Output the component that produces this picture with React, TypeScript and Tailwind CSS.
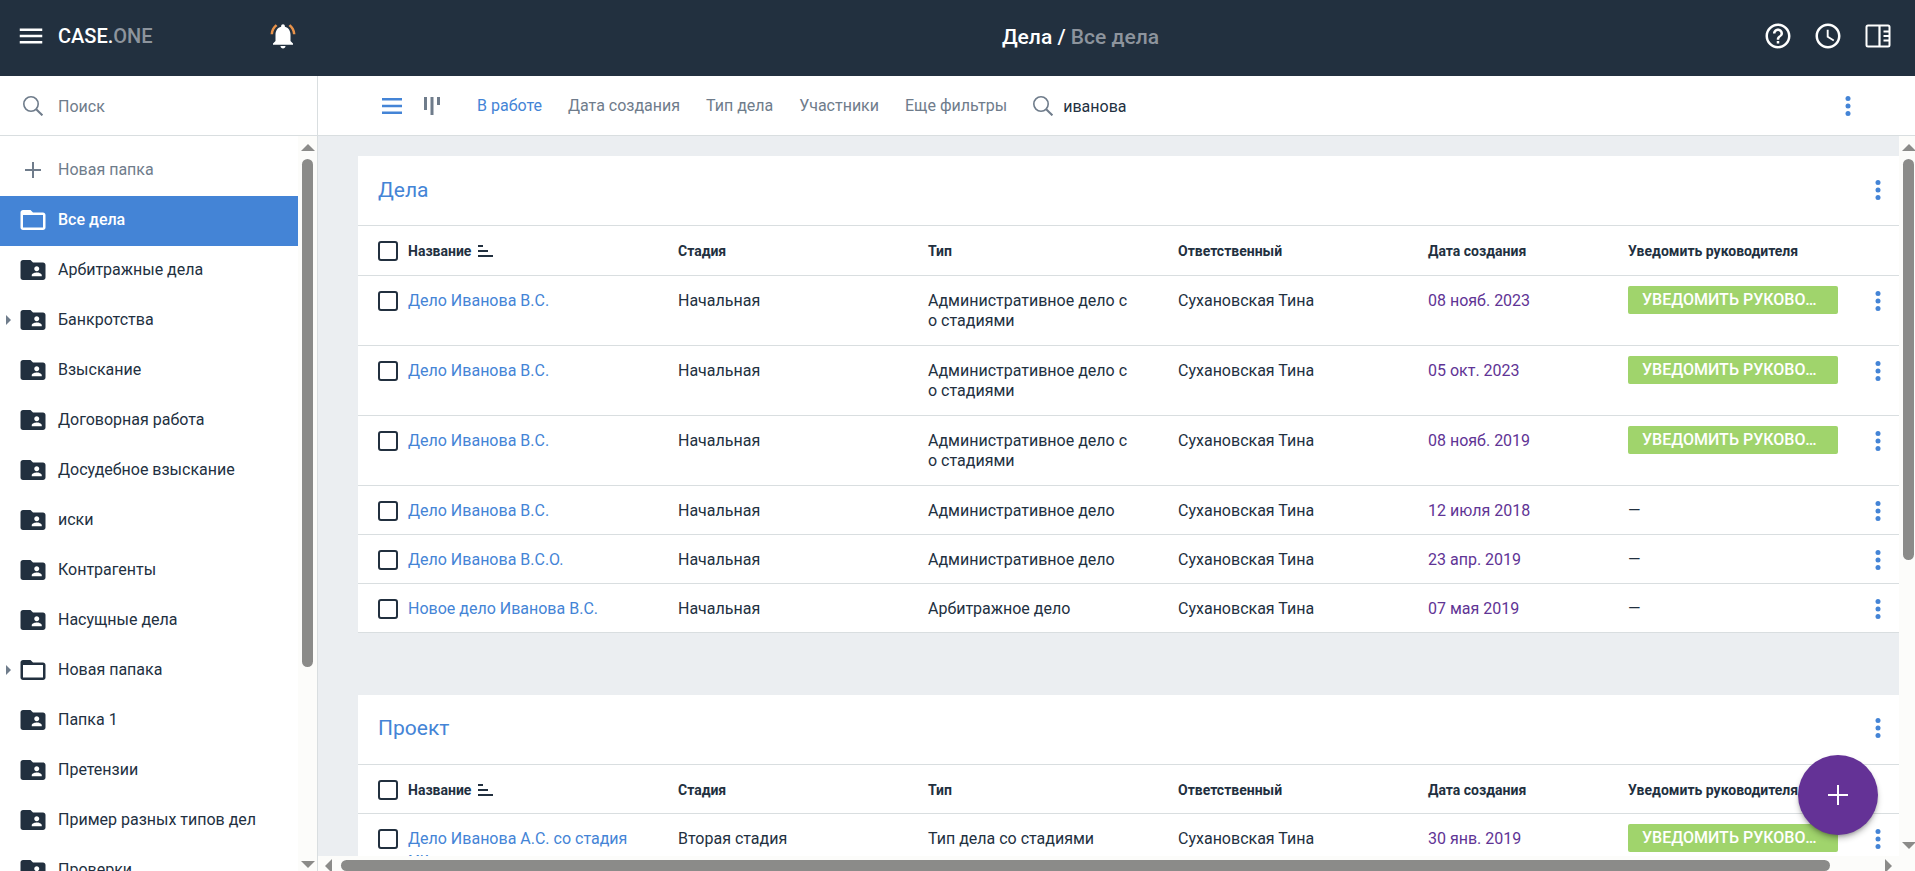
import React from "react";
import {
  MdAccessTime,
  MdFolderOpen,
  MdFolderShared,
  MdHelpOutline,
  MdMenu,
} from "react-icons/md";

type Folder = { name: string; open?: boolean; expandable?: boolean; active?: boolean };

const folders: Folder[] = [
  { name: "Все дела", open: true, active: true },
  { name: "Арбитражные дела" },
  { name: "Банкротства", expandable: true },
  { name: "Взыскание" },
  { name: "Договорная работа" },
  { name: "Досудебное взыскание" },
  { name: "иски" },
  { name: "Контрагенты" },
  { name: "Насущные дела" },
  { name: "Новая папака", open: true, expandable: true },
  { name: "Папка 1" },
  { name: "Претензии" },
  { name: "Пример разных типов дел" },
  { name: "Проверки" },
];

type Case = {
  name: string;
  stage: string;
  type: string;
  owner: string;
  date: string;
  notify: boolean;
};

const owner = "Сухановская Тина";
const staged = "Административное дело со стадиями";

const cases: Case[] = [
  { name: "Дело Иванова В.С.", stage: "Начальная", type: staged, owner, date: "08 нояб. 2023", notify: true },
  { name: "Дело Иванова В.С.", stage: "Начальная", type: staged, owner, date: "05 окт. 2023", notify: true },
  { name: "Дело Иванова В.С.", stage: "Начальная", type: staged, owner, date: "08 нояб. 2019", notify: true },
  { name: "Дело Иванова В.С.", stage: "Начальная", type: "Административное дело", owner, date: "12 июля 2018", notify: false },
  { name: "Дело Иванова В.С.О.", stage: "Начальная", type: "Административное дело", owner, date: "23 апр. 2019", notify: false },
  { name: "Новое дело Иванова В.С.", stage: "Начальная", type: "Арбитражное дело", owner, date: "07 мая 2019", notify: false },
];

const projects: Case[] = [
  { name: "Дело Иванова А.С. со стадиями", stage: "Вторая стадия", type: "Тип дела со стадиями", owner, date: "30 янв. 2019", notify: true },
];

function SearchIcon() {
  return (
    <svg viewBox="0 0 20 20" className="size-5 shrink-0" fill="none" stroke="currentColor" aria-hidden="true">
      <circle cx="8" cy="8" r="7.2" strokeWidth="1.6" />
      <path d="M13.2 13.2L19.4 19.4" strokeWidth="2" />
    </svg>
  );
}

function BellIcon() {
  return (
    <svg viewBox="0 0 24 24" className="size-[30px]" aria-hidden="true">
      <path
        fill="#e8924a"
        d="M7.58 4.08L6.15 2.65C3.75 4.48 2.17 7.3 2.03 10.5h2c.15-2.65 1.51-4.97 3.55-6.42zM19.97 10.5h2c-.15-3.2-1.73-6.02-4.12-7.85l-1.42 1.43c2.02 1.45 3.39 3.77 3.54 6.42z"
      />
      <path
        fill="#fff"
        d="M18 11c0-3.07-1.64-5.64-4.5-6.32V4c0-.83-.67-1.5-1.5-1.5s-1.5.67-1.5 1.5v.68C7.63 5.36 6 7.92 6 11v5l-2 2v1h16v-1l-2-2v-5zM12 22c1.1 0 2-.9 2-2h-4c0 1.1.9 2 2 2z"
      />
    </svg>
  );
}

function PanelIcon() {
  return (
    <svg viewBox="0 0 30 30" className="size-[30px]" fill="none" stroke="#fff" aria-hidden="true">
      <rect x="3.5" y="4.5" width="23" height="21" rx="1.5" strokeWidth="2" />
      <path d="M16.5 4v22" strokeWidth="2.2" />
      <path d="M20.5 10.5h6M20.5 15h6M20.5 19.5h6" strokeWidth="2" />
    </svg>
  );
}

function SortIcon() {
  return (
    <svg viewBox="0 0 15 12" className="h-3 w-[15px]" fill="currentColor" aria-hidden="true">
      <path d="M0 0h5v2H0zM0 5h10v2H0zM0 10h15v2H0z" />
    </svg>
  );
}

function MoreButton({ label }: { label: string }) {
  return (
    <button type="button" aria-label={label} className="flex h-5 w-5 items-center justify-center text-[#4484d6]">
      <svg viewBox="0 0 6 20" className="h-5 w-1.5 overflow-visible" fill="currentColor" aria-hidden="true">
        <circle cx="3" cy="2.5" r="2.5" />
        <circle cx="3" cy="10" r="2.5" />
        <circle cx="3" cy="17.5" r="2.5" />
      </svg>
    </button>
  );
}

function Arrow({ d, className }: { d: string; className: string }) {
  return (
    <svg viewBox="0 0 14 14" className={"shrink-0 " + className} fill="#8b8b89" aria-hidden="true">
      <path d={d} />
    </svg>
  );
}

function VerticalBar({ thumb }: { thumb: string }) {
  return (
    <div className="flex w-[19px] shrink-0 flex-col items-center bg-[#fcfcfa] pt-1" aria-hidden="true">
      <Arrow d="M7 4L14 11H0z" className="size-3.5" />
      <div className="mt-[5px] w-full flex-1">
        <div className={"mx-auto w-[11px] rounded-full bg-[#8b8b89] " + thumb} />
      </div>
      <Arrow d="M0 4h14L7 11z" className="size-3.5" />
    </div>
  );
}

function Tick({ label }: { label: string }) {
  return (
    <input
      type="checkbox"
      aria-label={label}
      className="block size-5 appearance-none rounded-[3px] border-2 border-[#22303f] bg-white checked:bg-[#22303f]"
    />
  );
}

const headings = ["Стадия", "Тип", "Ответственный", "Дата создания", "Уведомить руководителя"];

function CaseTable({ title, rows }: { title: string; rows: Case[] }) {
  return (
    <section className="bg-white">
      <div className="flex h-[70px] items-center justify-between border-b border-[#d9dee0] pr-[11px] pb-0.5 pl-5">
        <h2 className="text-[21px] leading-6 text-[#4484d6]">{title}</h2>
        <MoreButton label={"Действия: " + title} />
      </div>
      <table className="w-full table-fixed text-left">
        <colgroup>
          <col className="w-[50px]" />
          <col className="w-[270px]" />
          <col className="w-[250px]" />
          <col className="w-[250px]" />
          <col className="w-[250px]" />
          <col className="w-[200px]" />
          <col />
          <col className="w-[42px]" />
        </colgroup>
        <thead>
          <tr className="h-[49px] border-b border-[#d9dee0] text-sm font-bold">
            <th className="pt-0.5 pl-5">
              <Tick label={"Выбрать все: " + title} />
            </th>
            <th className="pt-0.5">
              <button type="button" className="flex items-center gap-[7px]">
                Название
                <SortIcon />
              </button>
            </th>
            {headings.map((heading) => (
              <th key={heading} className="pt-0.5 whitespace-nowrap">{heading}</th>
            ))}
            <th />
          </tr>
        </thead>
        <tbody>
          {rows.map((row, index) => (
            <tr key={index} className="border-b border-[#d9dee0] align-top">
              <td className="pt-[15px] pl-5">
                <Tick label={"Выбрать: " + row.name} />
              </td>
              <td className="pt-[15px] pr-10 pb-[13px]">
                <a href="#case" className="break-all text-[#4484d6]">{row.name}</a>
              </td>
              <td className="pt-[15px] pb-[13px]">{row.stage}</td>
              <td className="pt-[15px] pr-11 pb-[13px] break-all">{row.type}</td>
              <td className="pt-[15px] pb-[13px]">{row.owner}</td>
              <td className="pt-[15px] pb-[13px] text-[#5f3495]">{row.date}</td>
              {row.notify ? (
                <td className="pt-2.5 pb-[31px]">
                  <button
                    type="button"
                    className="block h-7 w-[210px] truncate rounded-xs bg-[#a0d46c] px-3.5 text-left font-medium text-white uppercase"
                  >
                    Уведомить руководителя
                  </button>
                </td>
              ) : (
                <td className="pt-[15px] pb-[13px]">—</td>
              )}
              <td className="pt-[15px] pl-[11px]">
                <MoreButton label={"Действия: " + row.name} />
              </td>
            </tr>
          ))}
        </tbody>
      </table>
    </section>
  );
}

const filters = ["Дата создания", "Тип дела", "Участники", "Еще фильтры"];

export default function App() {
  return (
    <div className="flex h-screen flex-col overflow-hidden bg-white font-[Roboto,sans-serif] text-base leading-5 text-[#22303f]">
      <header className="flex h-[76px] shrink-0 items-center bg-[#22303f] text-white">
        <div className="flex w-[318px] shrink-0 items-center pb-1">
          <button type="button" aria-label="Меню" className="ml-4 text-[30px]">
            <MdMenu />
          </button>
          <a href="#home" className="ml-3 w-[210px] text-xl leading-6 font-medium">
            CASE.<span className="text-[#8d949d]">ONE</span>
          </a>
          <button type="button" aria-label="Уведомления">
            <BellIcon />
          </button>
        </div>
        <h1 className="flex-1 pb-0.5 pl-20 text-center text-[21px] leading-6 font-medium whitespace-nowrap">
          Дела / <span className="text-[#8d949d]">Все дела</span>
        </h1>
        <div className="flex w-[152px] shrink-0 items-center justify-end gap-5 pr-[22px] pb-1 text-[30px]">
          <button type="button" aria-label="Помощь">
            <MdHelpOutline />
          </button>
          <button type="button" aria-label="История">
            <MdAccessTime />
          </button>
          <button type="button" aria-label="Боковая панель">
            <PanelIcon />
          </button>
        </div>
      </header>

      <div className="flex min-h-0 flex-1">
        <aside className="flex w-[318px] shrink-0 flex-col border-r border-[#d9dee0]">
          <label className="flex h-[60px] shrink-0 items-center gap-[15px] border-b border-[#d9dee0] pl-[23px] text-[#6f7c8b]">
            <SearchIcon />
            <input
              type="text"
              placeholder="Поиск"
              aria-label="Поиск"
              className="w-full bg-transparent pt-0.5 outline-none placeholder:text-[#6f7c8b] placeholder:opacity-100"
            />
          </label>
          <div className="flex min-h-0 flex-1">
            <nav className="min-w-0 flex-1 overflow-hidden pt-2.5">
              <button type="button" className="flex h-[50px] w-full items-center gap-[17px] pb-0.5 pl-[25px] text-[#6f7c8b]">
                <svg viewBox="0 0 16 16" className="size-4" fill="currentColor" aria-hidden="true">
                  <path d="M7 0h2v7h7v2H9v7H7V9H0V7h7z" />
                </svg>
                Новая папка
              </button>
              {folders.map((folder) => (
                <a
                  key={folder.name}
                  href="#folder"
                  className={
                    folder.active
                      ? "flex h-[50px] items-center bg-[#4484d6] pb-0.5 font-medium text-white"
                      : "flex h-[50px] items-center pb-0.5"
                  }
                >
                  <span className="w-[18px] pl-1.5 text-[#6f7c8b]">
                    {folder.expandable && (
                      <svg viewBox="0 0 5 10" className="h-2.5 w-[5px]" fill="currentColor" aria-hidden="true">
                        <path d="M0 0l5 5-5 5z" />
                      </svg>
                    )}
                  </span>
                  <span className="mr-2.5 text-[30px]">
                    {folder.open ? <MdFolderOpen /> : <MdFolderShared />}
                  </span>
                  {folder.name}
                </a>
              ))}
            </nav>
            <VerticalBar thumb="h-8/11" />
          </div>
        </aside>

        <main className="flex min-w-0 flex-1 flex-col">
          <div className="flex h-[60px] shrink-0 items-center border-b border-[#d9dee0] pr-[57px] pl-16 text-[#6f7c8b]">
            <button type="button" aria-label="Список" className="text-[#4484d6]">
              <svg viewBox="0 0 20 16" className="h-4 w-5" fill="currentColor" aria-hidden="true">
                <path d="M0 0h20v2.4H0zM0 6.8h20v2.4H0zM0 13.6h20V16H0z" />
              </svg>
            </button>
            <button type="button" aria-label="Доска" className="mr-[37px] ml-[22px]">
              <svg viewBox="0 0 16 18" className="h-[18px] w-4" fill="currentColor" aria-hidden="true">
                <path d="M0 0h3v13H0zM6.5 0h3v18h-3zM13 0h3v8h-3z" />
              </svg>
            </button>
            <div className="flex gap-[26px]">
              <button type="button" className="text-[#4484d6]">В работе</button>
              {filters.map((filter) => (
                <button type="button" key={filter}>{filter}</button>
              ))}
            </div>
            <label className="ml-[26px] flex items-center gap-2.5">
              <SearchIcon />
              <input
                type="text"
                defaultValue="иванова"
                aria-label="Поиск дел"
                className="w-60 bg-transparent pt-0.5 text-[#22303f] outline-none"
              />
            </label>
            <div className="ml-auto">
              <MoreButton label="Действия" />
            </div>
          </div>

          <div className="flex min-h-0 flex-1">
            <div className="flex min-w-0 flex-1 flex-col">
              <div className="flex min-h-0 flex-1 flex-col gap-[62px] overflow-hidden bg-[#ebeef1] pt-5 pl-10">
                <CaseTable title="Дела" rows={cases} />
                <CaseTable title="Проект" rows={projects} />
              </div>
              <div className="flex h-[15px] shrink-0 items-start overflow-hidden bg-[#fcfcfa] pt-[3px]" aria-hidden="true">
                <Arrow d="M11 0v14L4 7z" className="ml-[3px] size-3.5" />
                <div className="mt-px ml-1.5 min-w-0 flex-1">
                  <div className="h-[11px] w-29/30 rounded-full bg-[#8b8b89]" />
                </div>
                <Arrow d="M4 0v14l7-7z" className="mr-1 size-3.5" />
              </div>
            </div>
            <div className="-mr-[3px] flex bg-[#fcfcfa] pb-[19px]">
              <VerticalBar thumb="h-[59%]" />
            </div>
          </div>
        </main>
      </div>

      <button
        type="button"
        aria-label="Создать дело"
        className="fixed right-[37px] bottom-9 flex size-20 items-center justify-center rounded-full bg-[#643296] text-white shadow-md shadow-black/30"
      >
        <svg viewBox="0 0 20 20" className="size-5" fill="currentColor" aria-hidden="true">
          <path d="M9 0h2v9h9v2h-9v9H9v-9H0V9h9z" />
        </svg>
      </button>
    </div>
  );
}
